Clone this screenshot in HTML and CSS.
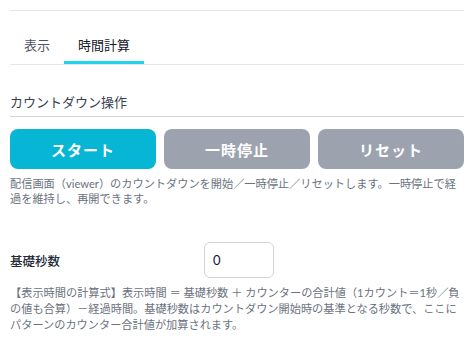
FILE: index.html
```html
<!DOCTYPE html>
<html lang="ja">
<head>
<meta charset="utf-8">
<link rel="stylesheet" href="styles.css">
</head>
<body>
<div class="panel">
  <div class="top-rule"></div>
  <div class="tabs">
    <div class="tab">表示</div>
    <div class="tab active">時間計算</div>
  </div>
  <section class="section">
    <h3 class="section-title">カウントダウン操作</h3>
    <div class="btn-row">
      <button class="btn btn-start">スタート</button>
      <button class="btn btn-gray">一時停止</button>
      <button class="btn btn-gray">リセット</button>
    </div>
    <p class="help">配信画面（viewer）のカウントダウンを開始／一時停止／リセットします。一時停止で経過を維持し、再開できます。</p>
  </section>
  <div class="field">
    <label class="field-label">基礎秒数</label>
    <input class="field-input" type="text" value="0">
  </div>
  <p class="help formula">【表示時間の計算式】表示時間 ＝ 基礎秒数 ＋ カウンターの合計値（1カウント＝1秒／負の値も合算）－経過時間。基礎秒数はカウントダウン開始時の基準となる秒数で、ここにパターンのカウンター合計値が加算されます。</p>
</div>
</body>
</html>
```
FILE: styles.css
```css
* { box-sizing: border-box; }
html, body { margin: 0; padding: 0; background: #ffffff; }
body {
  font-family: Lato, "Noto Sans CJK JP", sans-serif;
  color: #1f2937;
}
.panel {
  padding: 10px 10px 0 10px;
}
.top-rule {
  height: 1px;
  background: #e5e7eb;
}
.tabs {
  display: flex;
  margin-top: 16px;
  border-bottom: 1px solid #e5e7eb;
}
.tab {
  padding: 8px 14px 6px;
  font-size: 13px;
  line-height: 20px;
  color: #4b5563;
  border-bottom: 3px solid transparent;
}
.tab.active {
  color: #111827;
  border-bottom-color: #22d3ee;
}
.section-title {
  margin: 27px 0 0;
  padding-bottom: 4px;
  font-size: 13px;
  line-height: 20px;
  font-weight: 400;
  color: #374151;
  border-bottom: 1px solid #d1d5db;
}
.btn-row {
  display: grid;
  grid-template-columns: 1fr 1fr 1fr;
  gap: 8px;
  margin-top: 12px;
}
.btn {
  height: 40px;
  border: none;
  border-radius: 8px;
  color: #ffffff;
  font-family: Lato, "Noto Sans CJK JP", sans-serif;
  font-size: 15px;
  font-weight: 700;
  letter-spacing: 1px;
  padding: 0;
}
.btn-start { background: #06b6d4; }
.btn-gray { background: #9ca3af; }
.help {
  margin: 7px 0 0;
  font-size: 11.2px;
  line-height: 15px;
  color: #6b7280;
}
.field {
  display: grid;
  grid-template-columns: 194px 70px;
  align-items: center;
  margin-top: 36px;
}
.field-label {
  font-size: 12.5px;
  font-weight: 500;
  color: #1f2937;
}
.field-input {
  height: 36px;
  width: 70px;
  border: 1px solid #d1d5db;
  border-radius: 6px;
  padding: 0 8px;
  font-family: Lato, "Noto Sans CJK JP", sans-serif;
  font-size: 13px;
  color: #111827;
  outline: none;
}
.formula {
  margin-top: 7px;
  line-height: 16px;
}
```
